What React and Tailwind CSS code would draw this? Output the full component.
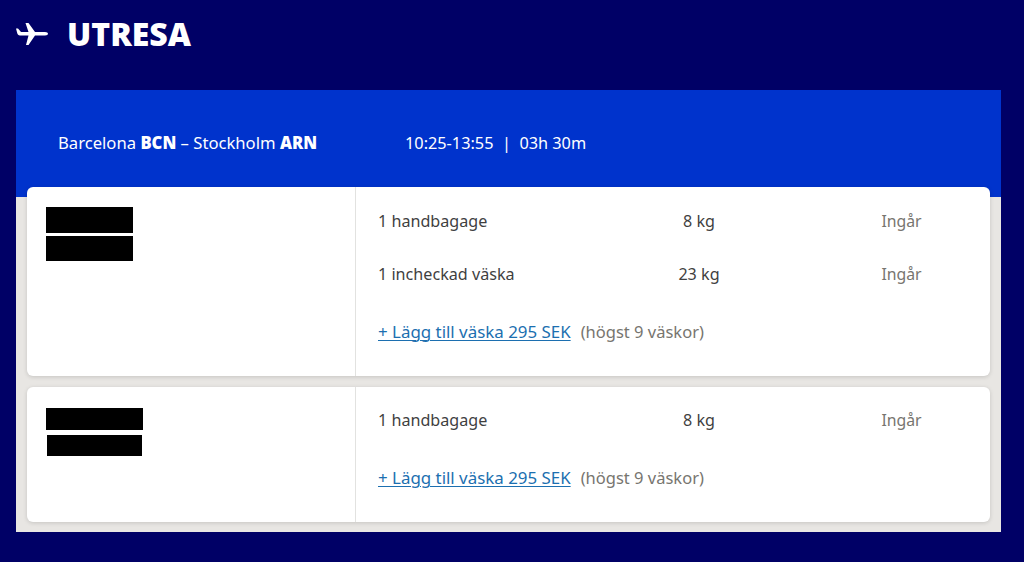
const rowText = "text-[16.15px] leading-6 text-[#3f3f3f]";

function PlaneIcon() {
  return (
    <svg width="32" height="22" viewBox="0 0 32 22" fill="white" className="shrink-0">
      <path d="M0 5.5 L2 5.5 L5 9 L12.5 9 L9.5 0 L12.5 0 L19 9 L29 9 C31 9 32 10 32 10.8 C32 11.6 31 12.5 29 12.5 L19 12.5 L12.5 22 L10 22 L12.5 12.5 L4 12.5 C2.5 12.5 1.5 11.5 1.2 10 Z" />
    </svg>
  );
}

function BagRow({ name, weight }) {
  return (
    <div className="flex items-center h-6 mb-[29px]">
      <div className={`w-[250px] ${rowText}`}>{name}</div>
      <div className={`w-[142px] text-center ${rowText}`}>{weight}</div>
      <div className="w-[178px] ml-[42.5px] text-center text-[15.8px] leading-6 text-[#77756f]">Ingår</div>
    </div>
  );
}

function AddBag() {
  return (
    <div className="flex items-center h-6 leading-6 mt-[34px]">
      <a className="text-[16.9px] text-[#1c6fb0] underline decoration-1 underline-offset-2 whitespace-pre">+ Lägg till väska 295 SEK</a>
      <span className="ml-[10px] text-[16.5px] text-[#77756f]">(högst 9 väskor)</span>
    </div>
  );
}

function PassengerCard({ blocks, rows, className, bodyClass }) {
  return (
    <div className={`flex bg-white rounded-md shadow-[0_1px_4px_rgba(0,0,0,0.15)] ${className}`}>
      <div className="w-[329px] shrink-0 border-r border-[#e2e2e0] pl-[19px] pt-5 flex flex-col">
        {blocks}
      </div>
      <div className={`flex-1 pl-[22px] ${bodyClass}`}>
        {rows.map((r) => (
          <BagRow key={r.name} name={r.name} weight={r.weight} />
        ))}
        <AddBag />
      </div>
    </div>
  );
}

export default function App() {
  return (
    <div className="w-[1024px] h-[562px] overflow-hidden bg-[#000066] pt-[19px] px-4 font-['Noto_Sans','Open_Sans',sans-serif]">
      <div className="flex items-center h-[30px]">
        <PlaneIcon />
        <h1 className="ml-[19px] text-[32px] leading-[30px] font-black text-white">UTRESA</h1>
      </div>

      <div className="mt-[41px] w-[985px] h-[442px] bg-[#e8e6e3]">
        <div className="h-[107px] bg-[#0033cc] flex pl-[42px] pt-[41px] text-[16.3px] leading-6 text-white">
          <div className="w-[347px] text-[16.65px]">
            Barcelona <b className="font-black">BCN</b> – Stockholm <b className="font-black">ARN</b>
          </div>
          <div className="whitespace-pre">10:25-13:55  |  03h 30m</div>
        </div>

        <div className="px-[11px] -mt-[10px] flex flex-col gap-[11px]">
          <PassengerCard
            className="h-[189px]"
            bodyClass="pt-[21.5px]"
            rows={[
              { name: "1 handbagage", weight: "8 kg" },
              { name: "1 incheckad väska", weight: "23 kg" },
            ]}
            blocks={
              <>
                <div className="w-[87px] h-[26px] bg-black" />
                <div className="w-[87px] h-[25px] mt-[3px] bg-black" />
              </>
            }
          />
          <PassengerCard
            className="h-[135px]"
            bodyClass="pt-[21px]"
            rows={[{ name: "1 handbagage", weight: "8 kg" }]}
            blocks={
              <>
                <div className="w-[97px] h-[22px] mt-px bg-black" />
                <div className="w-[95px] h-[21px] mt-[5px] ml-px bg-black" />
              </>
            }
          />
        </div>
      </div>
    </div>
  );
}
